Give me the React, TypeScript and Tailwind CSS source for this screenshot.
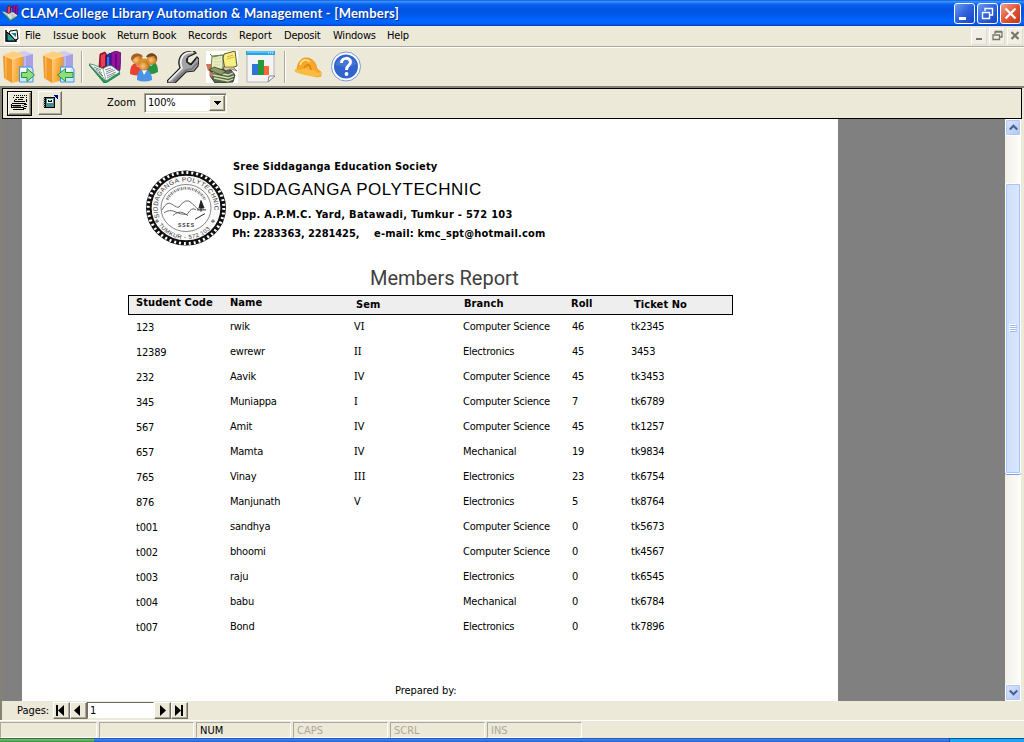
import React from 'react';

const members = [
  ['123', 'rwik', 'VI', 'Computer Science', '46', 'tk2345'],
  ['12389', 'ewrewr', 'II', 'Electronics', '45', '3453'],
  ['232', 'Aavik', 'IV', 'Computer Science', '45', 'tk3453'],
  ['345', 'Muniappa', 'I', 'Computer Science', '7', 'tk6789'],
  ['567', 'Amit', 'IV', 'Computer Science', '45', 'tk1257'],
  ['657', 'Mamta', 'IV', 'Mechanical', '19', 'tk9834'],
  ['765', 'Vinay', 'III', 'Electronics', '23', 'tk6754'],
  ['876', 'Manjunath', 'V', 'Electronics', '5', 'tk8764'],
  ['t001', 'sandhya', '', 'Computer Science', '0', 'tk5673'],
  ['t002', 'bhoomi', '', 'Computer Science', '0', 'tk4567'],
  ['t003', 'raju', '', 'Electronics', '0', 'tk6545'],
  ['t004', 'babu', '', 'Mechanical', '0', 'tk6784'],
  ['t007', 'Bond', '', 'Electronics', '0', 'tk7896'],
];

const raised =
  'border border-t-white border-l-white border-r-[#716f64] border-b-[#716f64] bg-[#ece9d8] shadow-[inset_-1px_-1px_0_#aca899]';

function OpenBook({ className }: { className: string }) {
  return (
    <svg className={className} viewBox="0 0 32 32">
      <path d="M11 3 16 1 18 4 18 17 10 16Z" fill="#c81428" stroke="#500010" strokeWidth=".7" />
      <path d="M13 4v12M15 3v12" stroke="#ff7080" />
      <path d="M17 5 21 2 23 5 23 18 17 16Z" fill="#2334b4" stroke="#101040" strokeWidth=".7" />
      <path d="M19 6v11" stroke="#8da0ff" />
      <path d="M22 2 27 0 32 2 31 19 26 23 22 18Z" fill="#9412a0" stroke="#3c0048" strokeWidth=".7" />
      <path d="M27 3v18" stroke="#5c0070" strokeWidth="1.5" />
      <path d="M0 14 16 30 30 21 31 23 17 32 15 32Z" fill="#20a060" stroke="#106038" strokeWidth=".6" />
      <path d="M0 13C4 13 8 15 14 18 17 15 21 14 23 15L31 21 17 30C13 24 7 20 0 13Z" fill="#fff" stroke="#28805c" strokeWidth=".8" />
      <path d="M14 18 17 29" stroke="#70a090" strokeWidth=".8" />
      <path d="m16 19 6-2m-5 4 7-3m-7 5 9-4m-8 6 9-4m-9 6 8-4M5 16l7 3m-5-1 6 4m-3-1 4 4" stroke="#606870" strokeWidth=".8" />
    </svg>
  );
}

function Binder({ back }: { back?: boolean }) {
  const id = back ? 'binderBack' : 'binder';
  return (
    <svg className="h-8 w-8 overflow-visible" viewBox="0 0 32 32">
      <defs>
        <linearGradient id={id} x1="0" x2="1" y1="0" y2=".3"><stop stopColor="#ffd28a" /><stop offset=".45" stopColor="#fbb44c" /><stop offset="1" stopColor="#f39a1e" /></linearGradient>
      </defs>
      <path d="M14 2 21 0 30 3V24L18 28Z" fill="#cfcbf8" />
      <path d="M20 6 30 3V25L20 29Z" fill="#a6a0e4" />
      <path d="M22 6V28" stroke="#c6c1f4" strokeWidth="1.500" />
      <path d="M0 4 9 8V32L1 27Z" fill="#f19a28" />
      <path d="M2 5.500 3.500 6V28.500L2.500 27.500Z" fill="#f9bd62" />
      <path d="M9 8 20 5V29L9 32Z" fill={`url(#${id})`} />
      <path d="M0 4 10 .5 20 3V5L9 8Z" fill="#ffcf80" />
      <path d="M0 4 9 8 20 5" fill="none" stroke="#ffe3b0" strokeWidth=".7" />
      {back ? (
        <>
          <path d="M17.500 16h11l2.500 2v13h-13.500Z" fill="#cfe6ff" stroke="#3f97ec" />
          <path d="M18.500 17h9v5h-9Z" fill="#f4faff" />
          <path d="M30 21.500h-7.500V17.500L14.500 24l8 6.500v-4H30Z" fill="#8ede7c" stroke="#2a9140" />
        </>
      ) : (
        <>
          <path d="M16.500 16h11l2.500 2v13H16.500Z" fill="#cfe6ff" stroke="#3f97ec" />
          <path d="M17.500 17h9v5h-9Z" fill="#f4faff" />
          <path d="M18.500 21.500H24V17.500L31.500 24 24 30.500v-4h-5.500Z" fill="#8ede7c" stroke="#2a9140" />
        </>
      )}
    </svg>
  );
}

function People() {
  return (
    <svg className="h-8 w-8" viewBox="0 0 32 32">
      <defs>
        <radialGradient id="skin" cx=".4" cy=".6"><stop stopColor="#ffc77b" /><stop offset="1" stopColor="#c87520" /></radialGradient>
      </defs>
      <path d="M1 23C1 14 4 12 9 12s8 4 8 11q-8 3-16 0Z" fill="#e8432f" />
      <path d="M14 22c0-7 4-11 9-11s6 5 6 10q-7 4-15 1Z" fill="#2c9140" />
      <path d="m7 12 2 4 3-4m8-1 2 4 3-4" stroke="#fff" strokeWidth=".6" fill="none" />
      <circle cx="8" cy="8" r="5.300" fill="url(#skin)" />
      <path d="M2 8C2 1 13 1 14 6L9 5 5 7 3 10Z" fill="#a95c25" />
      <circle cx="23" cy="8" r="5.300" fill="url(#skin)" />
      <path d="M17 6C19 0 29 1 28 9l-3-4-6 1Z" fill="#704624" />
      <path d="M8 29C8 20 11 18 15 18s8 3 8 11q-8 3-15 0Z" fill="#4b93e8" />
      <path d="m13 19 2 5 3-5Z" fill="#fff" />
      <circle cx="15" cy="14" r="5.600" fill="url(#skin)" />
      <path d="M9 15C7 5 23 5 21 15l-3-5-6 1Z" fill="#d79524" />
    </svg>
  );
}

function Wrench() {
  return (
    <svg className="h-8 w-8" viewBox="0 0 32 32">
      <path d="M0 30 13 17C10 10 13 3 19 1L27 0 29 2 21 6 20 11 24 13 30 6 32 8 31 15 27 20 19 21 8 32H1Z" fill="#a3a3a7" stroke="#202022" strokeWidth="1.200" />
      <path d="M2 30 15 17C12 10 15 4 20 2l6-1" fill="none" stroke="#f4f4f4" strokeWidth="1.500" />
      <path d="m6 31 13-12 6-1 5-6" fill="none" stroke="#77777c" strokeWidth="1.800" />
      <path d="M20 7q-2 5 4 7l5-6" fill="none" stroke="#111" />
    </svg>
  );
}

function Ledgers() {
  return (
    <svg className="h-8 w-8 bg-white" viewBox="0 0 32 32">
      <path d="M5 16 25 19 29 24 27 31 9 32 4 25Z" fill="#56694a" stroke="#20291a" strokeWidth=".8" />
      <path d="m7 21 15 3 5-2M7 24l15 3 6-2M8 27l14 3 5-2" fill="none" stroke="#d5e0ae" strokeWidth="1.300" />
      <path d="M0 13h5l2 5-5 2ZM3 20l5 3-3 4Z" fill="#cf7455" />
      <path d="m6 5 11-1v14l-12 1Z" fill="#e9eec0" stroke="#4d5c2e" strokeWidth=".8" />
      <path d="m8 8 7-1m-7 4h7m-7 3h6" stroke="#d2d7a8" />
      <path d="m18 3 11-3 2 15-12 4-2-12Z" fill="#f8f07e" stroke="#2c3218" strokeWidth=".8" />
      <path d="m21 6 6-2m-6 4 7-2" stroke="#d8b048" />
      <path d="m17 16 2 4 6-2 6 2-4-4Z" fill="#e2c2ae" stroke="#574335" strokeWidth=".6" />
      <path d="m4 3 3 3 9-2" stroke="#698a43" fill="none" />
      <path d="m3 19 5-3 12 4-5 4Z" fill="#8d9a64" stroke="#273120" strokeWidth=".7" />
    </svg>
  );
}

function Chart() {
  return (
    <svg className="h-8 w-8" viewBox="0 0 32 32">
      <path d="M1 1h27v24l-6 6H1Z" fill="#f4f4f6" stroke="#b4b4b4" />
      <path d="M0 0h29v4H0Z" fill="#24a5eb" />
      <path d="M1 1h27" stroke="#83dcff" />
      <path d="M22 2h1m1 0h1m1 0h1" stroke="#fff" />
      <path d="M6 13h6v11H6Z" fill="#2f75d8" />
      <path d="M12 9h6v15h-6Z" fill="#259a35" />
      <path d="M18 15h5v9h-5Z" fill="#ff6736" />
      <path d="m22 31 1-6h6Z" fill="#fff" stroke="#888" />
    </svg>
  );
}

function Helmet() {
  return (
    <svg className="h-8 w-8" viewBox="0 0 32 32">
      <path d="M3 18C4 11 7 7 12 7c7 0 10 5 11 11l4 3v4l-4 1L2 20Z" fill="#f8a828" stroke="#e4921b" strokeWidth=".8" />
      <path d="M1 18q5 2 10-1 8 1 13 5l3-1v3l-4 2Q11 25 1 21Z" fill="#fbbb42" />
      <path d="M6 14C8 8 13 8 16 11" fill="none" stroke="#ffe28a" strokeWidth="1.600" />
      <path d="M10 17q3-5 6-2l1 4" fill="none" stroke="#de8513" strokeWidth="1.600" />
    </svg>
  );
}

function Help() {
  return (
    <svg className="h-8 w-8" viewBox="0 0 32 32">
      <circle cx="15" cy="15.500" r="14.500" fill="#fff" stroke="#7897d6" strokeWidth="1" />
      <circle cx="15" cy="15.500" r="12" fill="#2f65cc" />
      <path d="M4.500 14a11 10 0 0 1 21-1q-9 5-21 1" fill="#5b88df" opacity=".5" />
      <path d="M10.500 12c0-6 9-6 9-1 0 4-4 3-4 8" fill="none" stroke="#fff" strokeWidth="3" />
      <circle cx="15.500" cy="23" r="1.900" fill="#fff" />
    </svg>
  );
}

function Seal() {
  return (
    <svg className="h-[78px] w-[82px]" viewBox="0 0 82 78">
      <g transform="translate(41 39) scale(1 .94)">
        <circle r="40" fill="#101010" />
        <circle r="37.800" fill="none" stroke="#fff" strokeWidth="3" strokeDasharray="2 2.950" />
        <circle r="35" fill="#fafafa" stroke="#111" strokeWidth="1.200" />
        <circle r="25" fill="#fff" stroke="#666" strokeWidth=".8" />
        <path id="sealTop" d="M-26.500 10A28.300 28.300 0 1 1 26.500 10" fill="none" />
        <path id="sealBottom" d="M-27.700 18A33 33 0 0 0 27.700 18" fill="none" />
        <path d="M-29 12v4m-2-2h4m54-2v4m-2-2h4" stroke="#555" />
        <text className="fill-[#333] font-['Liberation_Sans'] text-[6.5px]"><textPath href="#sealTop" textLength="101">SIDDAGANGA POLYTECHNIC</textPath></text>
        <text className="fill-[#333] font-['Liberation_Sans'] text-[6px]"><textPath href="#sealBottom" textLength="60">TUMKUR - 572 103</textPath></text>
        <path d="M-19 -9A21 21 0 0 1 19 -9" fill="none" stroke="#888" strokeWidth="3" strokeDasharray="1.500 .8 .7 .7" />
        <path d="M-24 2Q-19-8-14-4T-7-1Q0-12 6-5T13 1M-22 5q6-4 11-1t12 3q5-9 9-5M-13 8q5-5 10-3l5 3" fill="none" stroke="#555" strokeWidth=".9" />
        <path d="m15-8 3 8H13Zm0 8v4m-4-2h9M9 12l10-6" fill="#222" stroke="#222" strokeWidth="1" />
        <text x="-8" y="20" className="fill-[#333] font-['Liberation_Sans'] text-[5px] font-bold" textLength="16">SSES</text>
      </g>
    </svg>
  );
}

function WindowButton({ kind }: { kind: 'min' | 'restore' | 'close' }) {
  return (
    <div className={`flex h-[21px] w-[21px] items-center justify-center rounded-[3px] border border-white ${kind === 'close' ? 'bg-linear-to-br from-[#f0a088] via-[#e25434] to-[#c03814]' : 'bg-linear-to-br from-[#6f9bf0] via-[#2f62dc] to-[#1544c4]'}`}>
      <svg className="h-[19px] w-[19px]" viewBox="0 0 19 19" fill="none" stroke="#fff">
        {kind === 'min' && <path d="M4 14.500h7" strokeWidth="3" />}
        {kind === 'restore' && <path d="M7 7V4.500h7.500V11H12M4.500 8.500h7v6h-7ZM4 8.500h8M7 4.500h8" strokeWidth="1.400" />}
        {kind === 'close' && <path d="m4.500 4.500 10 10m0-10-10 10" strokeWidth="2.400" />}
      </svg>
    </div>
  );
}

function ChildButton({ kind }: { kind: 'min' | 'restore' | 'close' }) {
  return (
    <div className="h-[17px] w-4 border border-white border-r-[#e0ddcf] border-b-[#e0ddcf] bg-[#f1efe5]">
      <svg className="h-[15px] w-[14px]" viewBox="0 0 14 15" fill="none" stroke="#77756a">
        {kind === 'min' && <path d="M4 10h6" strokeWidth="2" />}
        {kind === 'restore' && <path d="M5 5V3h7v5H9.500M3 6h6.500v4.500H3ZM5 2.500h7" strokeWidth="1.300" />}
        {kind === 'close' && <path d="m3.500 3 7 7m0-7-7 7" strokeWidth="2.200" />}
      </svg>
    </div>
  );
}

function ScrollButton({ up }: { up?: boolean }) {
  return (
    <div className="flex h-[17px] w-4 items-center justify-center rounded-[2px] border border-white bg-linear-to-br from-[#dbe6ff] to-[#aec8f7] shadow-[inset_0_0_0_1px_#b4c8f6]">
      <svg className="h-[7px] w-[9px]" viewBox="0 0 9 7" fill="none" stroke="#4d6185" strokeWidth="2.200">
        <path d={up ? 'M.8 5.500 4.500 1.800 8.200 5.500' : 'M.8 1.500 4.500 5.200 8.200 1.500'} />
      </svg>
    </div>
  );
}

function NavButton({ d }: { d: string }) {
  return (
    <div className={`h-[17px] w-[17px] ${raised}`}>
      <svg className="h-[15px] w-[15px]" viewBox="0 0 15 15"><path d={d} fill="#000" /></svg>
    </div>
  );
}

function StatusPanel({ label, off, first }: { label?: string; off?: boolean; first?: boolean }) {
  return (
    <div className={`h-[16px] ${first ? 'w-[97px]' : 'w-[95px]'} border border-t-[#aca899] border-l-[#aca899] border-r-white border-b-white pl-[3px] text-[11px] leading-[15px] ${off ? 'text-[#aca899]' : 'text-black'}`}>
      {label}
    </div>
  );
}

export default function App() {
  return (
    <div className="flex h-[742px] w-[1024px] flex-col overflow-hidden bg-[#ece9d8] font-['DejaVu_Sans_Condensed','DejaVu_Sans',sans-serif] text-[11px] whitespace-pre text-black">
      <header className="flex h-[26px] shrink-0 items-center bg-[linear-gradient(#0a5ce0_0,#3b93ff_6%,#0a62ee_16%,#0054e3_35%,#0058ea_55%,#0066ff_80%,#0060f5_92%,#003dc0_100%)] pr-[3px] pl-0.5">
        <OpenBook className="h-4 w-4" />
        <h1 className="ml-[3px] flex-1 font-['Lato',sans-serif] text-[13px] leading-[26px] font-bold tracking-[0.230px] text-white [text-shadow:1px_1px_0_#0a318f]">CLAM-College Library Automation &amp; Management - [Members]</h1>
        <div className="flex gap-0.5">
          <WindowButton kind="min" />
          <WindowButton kind="restore" />
          <WindowButton kind="close" />
        </div>
      </header>

      <nav className="flex h-5 shrink-0 items-center tracking-[-0.2px]">
        <svg className="ml-[4px] h-4 w-4 bg-white" viewBox="0 0 16 16">
          <path d="M2 2v11h11" fill="none" stroke="#000" strokeWidth="1.500" />
          <path d="M3 4 12 13H3Z" fill="#2aa198" stroke="#000" />
          <path d="m6 3 7-1 1 9-3 1-6-7Z" fill="#f4f4f4" stroke="#000" />
          <path d="m7 5 5 4V5Z" fill="#178080" />
        </svg>
        <span className="ml-[5px] w-[28px]">File</span>
        <span className="w-16 tracking-[0px]">Issue book</span>
        <span className="w-[71px] tracking-[-0.1px]">Return Book</span>
        <span className="w-[51px] tracking-[0px]">Records</span>
        <span className="w-[45px] tracking-[0px]">Report</span>
        <span className="w-[49px]">Deposit</span>
        <span className="w-[54px]">Windows</span>
        <span className="flex-1">Help</span>
        <div className="flex gap-[2px] pr-px">
          <ChildButton kind="min" />
          <ChildButton kind="restore" />
          <ChildButton kind="close" />
        </div>
      </nav>

      <div className="flex h-[42px] shrink-0 items-start border-t border-b-2 border-t-[#aca899] border-b-[#848175] pt-[4px] pl-[3px] shadow-[inset_0_1px_0_#fff]">
        <Binder />
        <div className="w-2" />
        <Binder back />
        <div className="mr-[7px] ml-[6px] h-8 w-px bg-[#aca899] shadow-[1px_0_0_#fff]" />
        <OpenBook className="h-8 w-8" />
        <div className="w-[8px]" />
        <People />
        <div className="w-[6px]" />
        <Wrench />
        <div className="w-[7px]" />
        <Ledgers />
        <div className="w-[8px]" />
        <Chart />
        <div className="mr-[9px] ml-[6px] h-8 w-px bg-[#aca899] shadow-[1px_0_0_#fff]" />
        <Helmet />
        <div className="w-[5px]" />
        <Help />
      </div>

      <div className="flex h-[632px] shrink-0 flex-col border-r-2 border-l-2 border-r-[#ece9d8] border-l-[#848175]">
        <div className="flex h-[31px] shrink-0 items-center border border-black pb-px pl-[4px]">
          <div className="h-[25px] w-[25px] border border-black">
            <div className={`h-[23px] w-[23px] ${raised}`}>
              <svg className="h-[21px] w-[21px]" viewBox="0 0 21 21" fill="none" stroke="#000" shapeRendering="crispEdges">
                <path d="M5 2.500h13M4 4.500h2M17 4.500h2M5 7.500h1" strokeDasharray="1 1" />
                <path d="M7 4.500h3m1 0h4M6 6.500h2m1 0h5M5 8.500h11M17 5.500v3" />
                <path d="M2.500 10.500h14M3 12.500h9M2.500 14.500h12M4 16.500h11M2.500 11v4M15 11.500h3M15 13.500h3M14 15.500h3" />
                <path d="M13 12.500h2M4 13.500h8" stroke="#666" />
              </svg>
            </div>
          </div>
          <div className={`ml-[6px] h-6 w-6 ${raised}`}>
            <svg className="h-[22px] w-[22px]" viewBox="0 0 22 22" shapeRendering="crispEdges">
              <path d="M5 5h11v11H5Z" fill="#000" />
              <path d="M7 6h8v9H7Z" fill="#438b91" />
              <path d="M8 7h6v4H8Z" fill="#fff" />
              <path d="M9 8h4v2H9Z" fill="#000" />
              <path d="M10 8h2v1h-2Z" fill="#9cc" />
              <path d="M4 6h2v1H4Zm0 2h2v1H4Zm0 2h2v1H4Zm0 2h2v1H4Zm0 2h2v1H4Z" fill="#999" />
              <path d="M15 3h4v4h-1V6h-1V5h-1V4h-1Z" fill="#0000a8" />
            </svg>
          </div>
          <span className="ml-[45px] w-[37px] tracking-[0.1px]">Zoom</span>
          <div className="flex h-5 w-[83px] justify-between border border-t-[#aca899] border-l-[#aca899] border-r-white border-b-white bg-white pl-[3px] leading-[18px] tracking-[-0.2px] shadow-[inset_1px_1px_0_#716f64,inset_-1px_-1px_0_#ece9d8]">
            <span>100%</span>
            <div className={`mt-px mr-px flex h-4 w-4 items-center justify-center ${raised}`}>
              <svg className="h-1 w-[7px]" viewBox="0 0 7 4" shapeRendering="crispEdges"><path d="M0 0h7L3.500 4Z" /></svg>
            </div>
          </div>
        </div>

        <main className="flex h-[582px] shrink-0 bg-[#808080] pl-5">
          <article className="h-[582px] w-[816px] overflow-hidden bg-white">
            <div className="flex h-[141px] pl-[123px]">
              <div className="pt-[50px]"><Seal /></div>
              <div className="pt-[39px] pl-[6px] font-bold">
                <p className="h-[19px] text-[11px] leading-[18px] tracking-[0.19px]">Sree Siddaganga Education Society</p>
                <p className="h-[28px] font-['Liberation_Sans',sans-serif] text-[17px] leading-[25px] font-normal tracking-[0.550px]">SIDDAGANGA POLYTECHNIC</p>
                <p className="h-[20px] text-[11px] leading-[19px] tracking-[0.28px]">Opp. A.P.M.C. Yard, Batawadi, Tumkur - 572 103</p>
                <p className="-ml-px flex text-[11px] leading-[18px]"><span className="w-[142px] tracking-[-0.08px]">Ph: 2283363, 2281425,</span><span className="tracking-[0.190px]">e-mail: kmc_spt@hotmail.com</span></p>
              </div>
            </div>
            <h2 className="mt-[6px] h-[29px] pl-[348px] font-['Roboto',sans-serif] text-[20px] leading-[25px] text-[#404040]">Members Report</h2>
            <div className="ml-[106px] grid h-5 w-[605px] grid-cols-[94px_126px_108px_107px_63px_auto] border border-black bg-[#eee] pl-[7px] text-[11px] leading-[14px] font-bold tracking-[0.080px]">
              <span>Student Code</span>
              <span>Name</span>
              <span className="pt-[2px]">Sem</span>
              <span className="pt-px">Branch</span>
              <span className="pt-px">Roll</span>
              <span className="pt-[2px]">Ticket No</span>
            </div>
            <div className="ml-[114px] h-[363px] pt-[2px]">
              {members.map((m) => (
                <div key={m[0]} className="grid h-[25px] grid-cols-[94px_124px_109px_109px_59px_auto] text-[11px] leading-[20px] tracking-[-0.24px]">
                  <span className="pt-px">{m[0]}</span>
                  <span>{m[1]}</span>
                  <span className="font-['Noto_Sans',sans-serif] leading-[18px] tracking-[0.100px]">{m[2]}</span>
                  <span>{m[3]}</span>
                  <span>{m[4]}</span>
                  <span>{m[5]}</span>
                </div>
              ))}
            </div>
            <p className="pt-[3px] pl-[373px] leading-[20px] tracking-[-0.050px]">Prepared by:</p>
          </article>
          <div className="flex-1" />
          <div className="flex w-4 flex-col bg-linear-to-r from-[#f1efe6] to-[#fefefb]">
            <ScrollButton up />
            <div className="h-[47px]" />
            <div className="flex h-[291px] w-4 flex-col items-center justify-center gap-px rounded-[2px] border border-white bg-linear-to-r from-[#cfdffc] to-[#d8e7ff] shadow-[inset_0_0_0_1px_#a9c6fb,0_1px_0_#7f9fd8]">
              <div className="h-px w-[7px] bg-[#9dbcf5] shadow-[-1px_-1px_0_#fff]" />
              <div className="h-px w-[7px] bg-[#9dbcf5] shadow-[-1px_-1px_0_#fff]" />
              <div className="h-px w-[7px] bg-[#9dbcf5] shadow-[-1px_-1px_0_#fff]" />
              <div className="h-px w-[7px] bg-[#9dbcf5] shadow-[-1px_-1px_0_#fff]" />
            </div>
            <div className="flex-1" />
            <ScrollButton />
          </div>
          <div className="w-px bg-[#ece9d8]" />
        </main>

        <div className="flex h-[19px] shrink-0 items-start pt-px pl-[15px]">
          <span className="w-9 leading-[17px] tracking-[-0.050px]">Pages:</span>
          <NavButton d="M2 2h2v11H2Zm8 0v11L4 7.500Z" />
          <NavButton d="M9 2v11L3 7.500Z" />
          <div className="h-[17px] w-[67px] border border-t-[#716f64] border-l-[#716f64] border-r-white border-b-[#ece9d8] bg-white pl-[2px] leading-[16px]">1</div>
          <NavButton d="M5 2v11l6-5.500Z" />
          <NavButton d="M3 2v11l6-5.500ZM9 2h2v11H9Z" />
        </div>
      </div>

      <footer className="flex h-[18px] shrink-0 gap-[2px] border-t border-white pt-px">
        <StatusPanel first />
        <StatusPanel />
        <StatusPanel label="NUM" />
        <StatusPanel label="CAPS" off />
        <StatusPanel label="SCRL" off />
        <StatusPanel label="INS" off />
      </footer>
      <div className="flex h-[4px] shrink-0">
        <div className="w-[94px] border-t border-[#3d6f38] bg-linear-to-b from-[#7cc07c] to-[#3b963b]" />
        <div className="flex-1 border-t border-[#2358c4] bg-linear-to-b from-[#458aee] to-[#2463d0]" />
        <div className="w-[75px] border-t border-l border-[#0d50b4] bg-[#17a8ee]" />
      </div>
    </div>
  );
}
